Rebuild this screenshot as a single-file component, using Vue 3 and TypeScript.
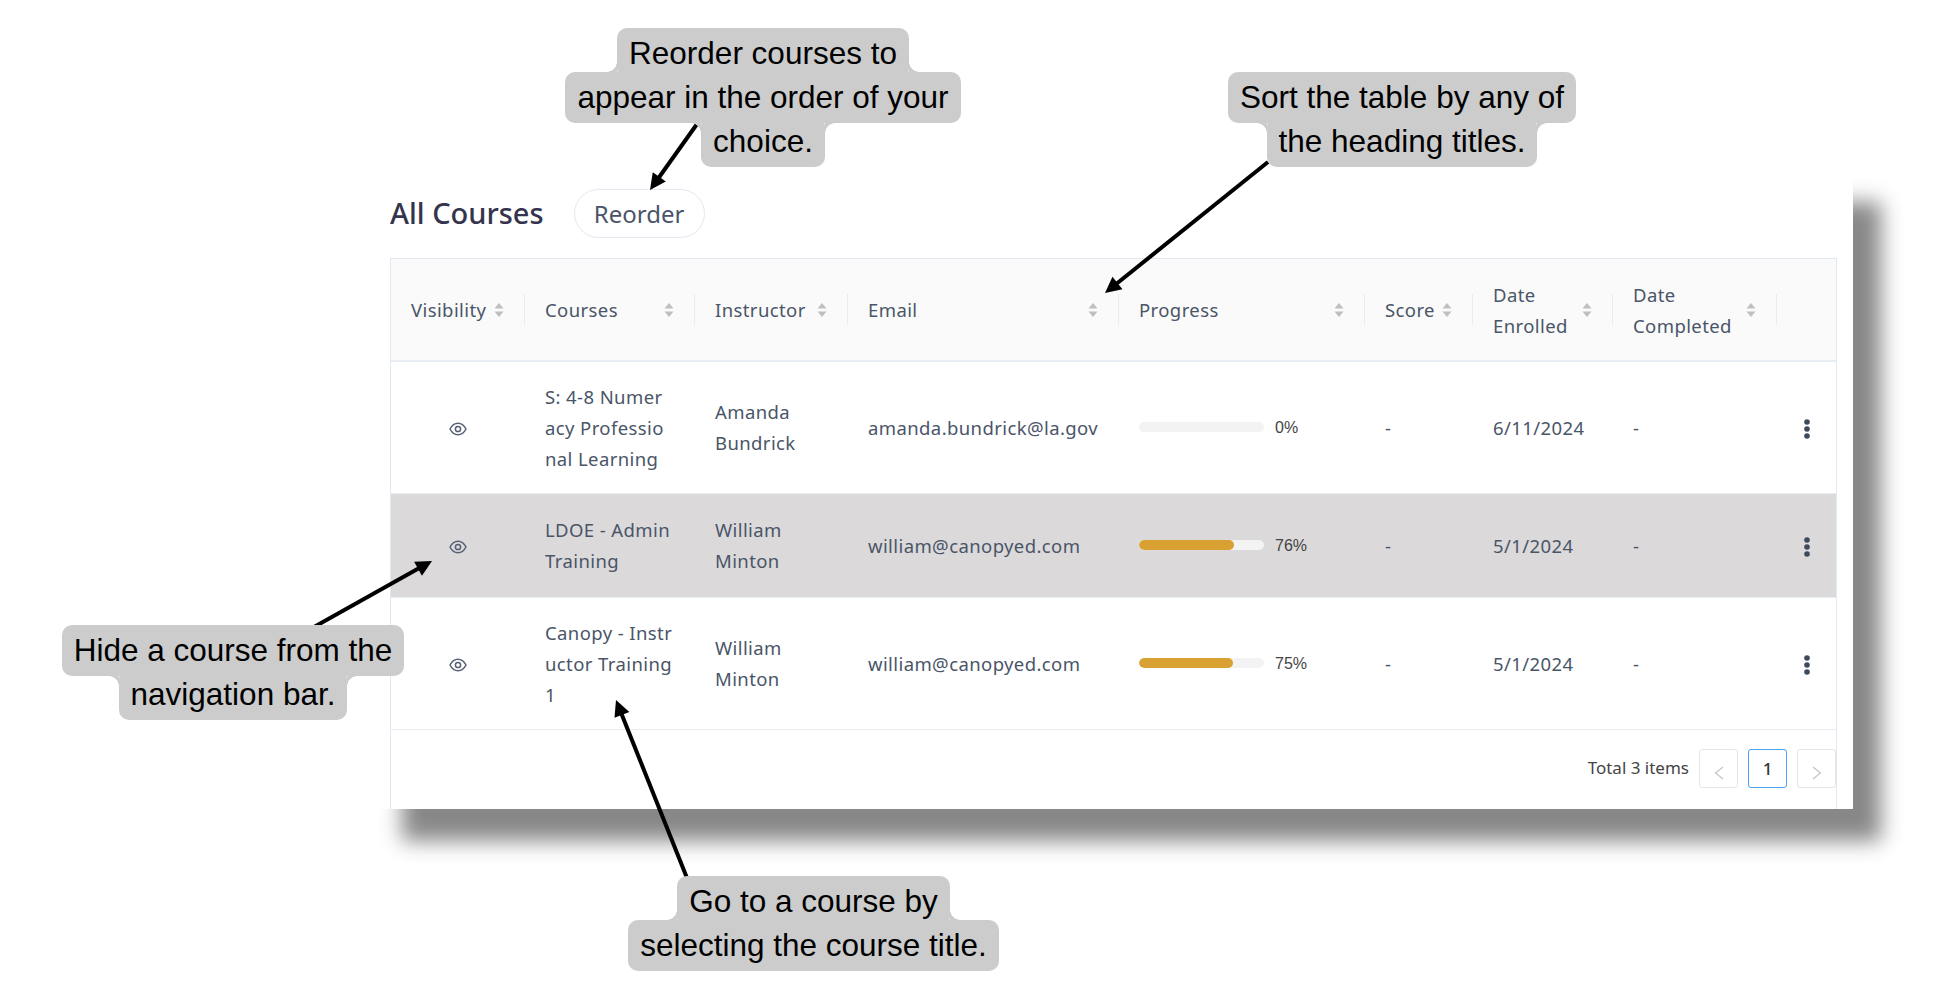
<script setup lang="ts">
interface Column {
  title: string
  width: number
  sortable: boolean
}

interface Course {
  name: string
  instructor: string
  email: string
  progress: number
  enrolled: string
  highlighted?: boolean
}

interface Arrow {
  from: [number, number]
  to: [number, number]
}

const columns: Column[] = [
  { title: 'Visibility', width: 134, sortable: true },
  { title: 'Courses', width: 170, sortable: true },
  { title: 'Instructor', width: 153, sortable: true },
  { title: 'Email', width: 271, sortable: true },
  { title: 'Progress', width: 246, sortable: true },
  { title: 'Score', width: 108, sortable: true },
  { title: 'Date\nEnrolled', width: 140, sortable: true },
  { title: 'Date\nCompleted', width: 164, sortable: true },
  { title: '', width: 59, sortable: false },
]

const courses: Course[] = [
  {
    name: 'S: 4-8 Numer\nacy Professio\nnal Learning',
    instructor: 'Amanda\nBundrick',
    email: 'amanda.bundrick@la.gov',
    progress: 0,
    enrolled: '6/11/2024',
  },
  {
    name: 'LDOE - Admin\nTraining',
    instructor: 'William\nMinton',
    email: 'william@canopyed.com',
    progress: 76,
    enrolled: '5/1/2024',
    highlighted: true,
  },
  {
    name: 'Canopy - Instr\nuctor Training\n1',
    instructor: 'William\nMinton',
    email: 'william@canopyed.com',
    progress: 75,
    enrolled: '5/1/2024',
  },
]

const arrows: Arrow[] = [
  { from: [697, 124], to: [650, 190] },
  { from: [1268, 162], to: [1105, 293] },
  { from: [314, 627], to: [432, 561] },
  { from: [687, 878], to: [616, 700] },
]

function shaft(a: Arrow) {
  const [x1, y1] = a.from
  const [x2, y2] = a.to
  const len = Math.hypot(x2 - x1, y2 - y1)
  return { x1, y1, x2: x2 - ((x2 - x1) / len) * 12, y2: y2 - ((y2 - y1) / len) * 12 }
}

function head(a: Arrow) {
  const [x1, y1] = a.from
  const [x2, y2] = a.to
  const len = Math.hypot(x2 - x1, y2 - y1)
  const ux = (x2 - x1) / len
  const uy = (y2 - y1) / len
  const bx = x2 - ux * 16
  const by = y2 - uy * 16
  return `${x2},${y2} ${bx - uy * 8},${by + ux * 8} ${bx + uy * 8},${by - ux * 8}`
}
</script>

<template>
  <div class="page">
    <div class="panel">
      <div class="panel__head">
        <h2 class="panel__title">All Courses</h2>
        <button class="reorder">Reorder</button>
      </div>

      <div class="table-box">
        <table class="courses">
          <colgroup>
            <col v-for="c in columns" :key="c.title" :style="{ width: c.width + 'px' }" />
          </colgroup>
          <thead>
            <tr>
              <th v-for="(c, i) in columns" :key="c.title">
                <div class="th-inner">
                  <span class="th-title">{{ c.title }}</span>
                  <svg v-if="c.sortable" class="sort" width="10" height="16" viewBox="0 0 10 16">
                    <path d="M5 1 9.5 6.5H.5z" />
                    <path d="M5 15 .5 9.5h9z" />
                  </svg>
                </div>
                <span v-if="i < columns.length - 1" class="divider"></span>
              </th>
            </tr>
          </thead>
          <tbody>
            <tr v-for="course in courses" :key="course.name" :class="{ 'row--on': course.highlighted }">
              <td class="center">
                <svg class="eye" width="18" height="14" viewBox="0 0 18 14" fill="none" stroke="#566074" stroke-width="1.5">
                  <path d="M1 7C3 3.2 5.7 1.2 9 1.2S15 3.2 17 7c-2 3.800-4.700 5.800-8 5.800S3 10.800 1 7z" />
                  <circle cx="9" cy="7" r="2.600" />
                </svg>
              </td>
              <td class="multi">{{ course.name }}</td>
              <td class="multi">{{ course.instructor }}</td>
              <td>{{ course.email }}</td>
              <td>
                <div class="progress">
                  <div class="progress__track">
                    <div class="progress__fill" :style="{ width: course.progress + '%' }"></div>
                  </div>
                  <span class="progress__text">{{ course.progress }}%</span>
                </div>
              </td>
              <td>-</td>
              <td>{{ course.enrolled }}</td>
              <td>-</td>
              <td class="center">
                <svg class="kebab" width="6" height="20" viewBox="0 0 6 20" fill="#3d4a5c">
                  <circle cx="3" cy="3" r="2.800" />
                  <circle cx="3" cy="10" r="2.800" />
                  <circle cx="3" cy="17" r="2.800" />
                </svg>
              </td>
            </tr>
          </tbody>
        </table>

        <div class="pager">
          <span class="pager__total">Total 3 items</span>
          <span class="pager__btn">
            <svg class="chev" width="10" height="14" viewBox="0 0 10 14" fill="none" stroke="#c4c4c4" stroke-width="1.2">
              <path d="M9 1 1.500 7 9 13" />
            </svg>
          </span>
          <span class="pager__btn pager__btn--on">1</span>
          <span class="pager__btn">
            <svg class="chev" width="10" height="14" viewBox="0 0 10 14" fill="none" stroke="#c4c4c4" stroke-width="1.2">
              <path d="M1 1 8.500 7 1 13" />
            </svg>
          </span>
        </div>
      </div>
    </div>

    <svg class="arrows" width="1952" height="1002" viewBox="0 0 1952 1002">
      <g v-for="a in arrows" :key="a.to[0]">
        <line v-bind="shaft(a)" stroke="#000" stroke-width="4" />
        <polygon :points="head(a)" fill="#000" />
      </g>
    </svg>

    <div class="callout callout--reorder">
      <span class="line fillet-b">Reorder courses to</span>
      <span class="line">appear in the order of your</span>
      <span class="line fillet-t">choice.</span>
    </div>
    <div class="callout callout--sort">
      <span class="line">Sort the table by any of</span>
      <span class="line fillet-t">the heading titles.</span>
    </div>
    <div class="callout callout--hide">
      <span class="line">Hide a course from the</span>
      <span class="line fillet-t">navigation bar.</span>
    </div>
    <div class="callout callout--goto">
      <span class="line fillet-b">Go to a course by</span>
      <span class="line">selecting the course title.</span>
    </div>
  </div>
</template>

<style scoped>
.page {
  position: relative;
  width: 1952px;
  height: 1002px;
  overflow: hidden;
  background: #fff;
  padding: 170px 0 0 374px;
  box-sizing: border-box;
  font-family: "Noto Sans", sans-serif;
  color: #4a5568;
}

.panel {
  width: 1479px;
  padding: 19px 16px 0 16px;
  box-sizing: border-box;
  background: #fff;
  box-shadow: 28px 32px 20px #888;
}

.panel__head {
  display: flex;
  align-items: center;
  gap: 30px;
  height: 49px;
  margin-bottom: 20px;
}

.panel__title {
  margin: 0 0 2px;
  font-size: 29px;
  font-weight: 500;
  color: #34344e;
}

.reorder {
  width: 131px;
  height: 49px;
  padding: 0;
  border: 1px solid #e2e8f0;
  border-radius: 25px;
  background: #fff;
  font: inherit;
  font-size: 24px;
  color: #4a5568;
}

.table-box {
  width: 1447px;
  height: 551px;
  box-sizing: border-box;
  border: 1px solid #e2e8f0;
  border-bottom: 0;
}

.courses {
  width: 1445px;
  table-layout: fixed;
  border-collapse: collapse;
  font-size: 18.5px;
  letter-spacing: 0.4px;
  line-height: 31px;
}

.courses th {
  position: relative;
  height: 102px;
  padding: 0 21px 0 20px;
  box-sizing: border-box;
  background: #fafafa;
  border-bottom: 2px solid #e8edf3;
  font-weight: 400;
  text-align: left;
}

.th-inner {
  display: flex;
  align-items: center;
  justify-content: space-between;
}

.th-title {
  white-space: pre-line;
}

.sort {
  flex: none;
  fill: #bfbfbf;
}

.divider {
  position: absolute;
  top: 35px;
  right: 0;
  width: 1px;
  height: 31px;
  background: #ebebeb;
}

.courses td {
  padding: 0 20px;
  box-sizing: border-box;
  border-bottom: 1px solid #e8edf3;
  height: 132px;
  white-space: nowrap;
}

.row--on td {
  height: 104px;
  background: #dbd9da;
}

.courses td.multi {
  white-space: pre-line;
}

.courses td.center {
  padding: 3px 0 0;
  text-align: center;
}

.eye,
.kebab {
  display: block;
  margin: 0 auto;
}

.progress {
  display: flex;
  align-items: center;
  gap: 11px;
}

.progress__track {
  width: 125px;
  height: 10px;
  border-radius: 5px;
  background: #f3f3f3;
  overflow: hidden;
}

.progress__fill {
  height: 100%;
  border-radius: 5px;
  background: #d9a032;
}

.progress__text {
  font-family: "Liberation Sans", sans-serif;
  font-size: 16px;
  letter-spacing: 0;
  color: #444;
}

.pager {
  display: flex;
  align-items: center;
  justify-content: flex-end;
  gap: 10px;
  height: 79px;
  padding-bottom: 2px;
  box-sizing: border-box;
}

.pager__total {
  margin-bottom: 2px;
  font-size: 17px;
  color: #444;
}

.pager__btn {
  display: flex;
  align-items: center;
  justify-content: center;
  width: 39px;
  height: 39px;
  box-sizing: border-box;
  border: 1px solid #e6e6e6;
  border-radius: 3px;
  font-size: 17px;
  font-weight: 500;
  color: #333;
}

.pager__btn--on {
  border-color: #4aa3f5;
}

.chev {
  margin-top: 9px;
}

.arrows {
  position: absolute;
  top: 0;
  left: 0;
}

.callout {
  position: absolute;
  display: flex;
  flex-direction: column;
  align-items: center;
  font-family: "Liberation Sans", sans-serif;
  font-size: 31.5px;
  color: #000;
}

.callout--reorder {
  left: 565px;
  top: 28px;
  width: 396px;
}

.callout--sort {
  left: 1228px;
  top: 72px;
  width: 348px;
}

.callout--hide {
  left: 61px;
  top: 625px;
  width: 344px;
}

.callout--goto {
  left: 627px;
  top: 876px;
  width: 373px;
}

.line {
  position: relative;
  height: 51px;
  line-height: 51px;
  padding: 0 12px;
  margin-bottom: -7px;
  border-radius: 10px;
  background: #ccc;
  white-space: nowrap;
}

.fillet-b::before,
.fillet-b::after,
.fillet-t::before,
.fillet-t::after {
  content: "";
  position: absolute;
  width: 10px;
  height: 10px;
}

.fillet-b::before,
.fillet-b::after {
  bottom: 7px;
}

.fillet-t::before,
.fillet-t::after {
  top: 7px;
}

.fillet-b::before,
.fillet-t::before {
  left: -10px;
}

.fillet-b::after,
.fillet-t::after {
  right: -10px;
}

.fillet-b::before {
  background: radial-gradient(circle at 0 0, transparent 9.5px, #ccc 10px);
}

.fillet-b::after {
  background: radial-gradient(circle at 100% 0, transparent 9.5px, #ccc 10px);
}

.fillet-t::before {
  background: radial-gradient(circle at 0 100%, transparent 9.5px, #ccc 10px);
}

.fillet-t::after {
  background: radial-gradient(circle at 100% 100%, transparent 9.5px, #ccc 10px);
}
</style>
